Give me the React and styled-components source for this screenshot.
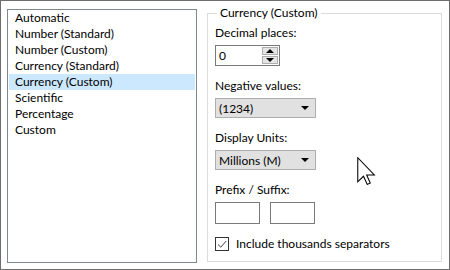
import React from "react";
import styled, { createGlobalStyle } from "styled-components";

const GlobalStyle = createGlobalStyle`
  html, body {
    margin: 0;
    padding: 0;
    background: #ffffff;
  }
  body {
    font-family: "Segoe UI", Lato, "Noto Sans", sans-serif;
    font-size: 12px;
    color: #000;
  }
`;

const formats = [
  "Automatic",
  "Number (Standard)",
  "Number (Custom)",
  "Currency (Standard)",
  "Currency (Custom)",
  "Scientific",
  "Percentage",
  "Custom",
];

function App() {
  return (
    <>
      <GlobalStyle />
      <Frame>
        <FormatList>
          {formats.map((f) => (
            <ListItem key={f} selected={f === "Currency (Custom)"}>
              {f}
            </ListItem>
          ))}
        </FormatList>
        <Group>
          <Legend>Currency (Custom)</Legend>
          <FieldLabel>Decimal places:</FieldLabel>
          <Spinner>
            <SpinValue>0</SpinValue>
            <SpinButtons>
              <SpinButton>
                <Arrow up />
              </SpinButton>
              <SpinButton>
                <Arrow />
              </SpinButton>
            </SpinButtons>
          </Spinner>

          <FieldLabel gap>Negative values:</FieldLabel>
          <Dropdown>
            <span>(1234)</span>
            <Arrow />
          </Dropdown>

          <FieldLabel gap>Display Units:</FieldLabel>
          <Dropdown>
            <span>Millions (M)</span>
            <Arrow />
          </Dropdown>

          <FieldLabel gap>Prefix / Suffix:</FieldLabel>
          <AffixRow>
            <TextBox />
            <TextBox />
          </AffixRow>

          <CheckRow>
            <CheckBox>
              <svg width="12" height="12" viewBox="0 0 12 12">
                <path d="M2 6.5 L4.8 9.2 L10.2 3" fill="none" stroke="#444" strokeWidth="1" />
              </svg>
            </CheckBox>
            <span>Include thousands separators</span>
          </CheckRow>
        </Group>
        <Cursor>
          <svg width="19" height="28" viewBox="0 0 12.6 18.6">
            <path
              d="M0.5 0.5 L0.5 16.5 L4.3 12.8 L6.8 18.2 L8.8 17.3 L6.4 11.9 L11.5 11.9 Z"
              fill="#fff"
              stroke="#000"
              strokeWidth="0.7"
              strokeLinejoin="miter"
            />
          </svg>
        </Cursor>
      </Frame>
    </>
  );
}

export default App;

const Frame = styled.div`
  position: relative;
  box-sizing: border-box;
  width: 450px;
  height: 270px;
  border: 1px solid #6d6d6d;
  padding: 4px 7px 0 6px;
  display: flex;
  align-items: flex-start;
  gap: 10px;
`;

const FormatList = styled.ul`
  box-sizing: border-box;
  list-style: none;
  margin: 4px 0 0 0;
  padding: 0 1px;
  width: 190px;
  height: 254px;
  border: 1px solid #828790;
`;

const ListItem = styled.li`
  height: 16px;
  line-height: 16px;
  padding-left: 6px;
  background: ${(p) => (p.selected ? "#cce8ff" : "transparent")};
`;

const Group = styled.fieldset`
  box-sizing: border-box;
  flex: 1;
  margin: 0;
  height: 257px;
  border: 1px solid #dcdcdc;
  padding: 4px 7px 0 7px;
  display: flex;
  flex-direction: column;
  align-items: flex-start;
`;

const Legend = styled.legend`
  padding: 0 3px;
  margin-left: 2px;
  line-height: 16px;
`;

const FieldLabel = styled.div`
  line-height: 16px;
  margin-top: ${(p) => (p.gap ? "12px" : "0")};
  margin-bottom: 4px;
`;

const Spinner = styled.div`
  box-sizing: border-box;
  width: 65px;
  height: 21px;
  border: 1px solid #7a7a7a;
  display: flex;
  align-items: center;
  padding: 1px;
`;

const SpinValue = styled.span`
  flex: 1;
  padding-left: 2px;
  line-height: 16px;
`;

const SpinButtons = styled.div`
  display: flex;
  flex-direction: column;
  gap: 1px;
`;

const SpinButton = styled.div`
  box-sizing: border-box;
  width: 16px;
  height: 8px;
  background: #e5e5e5;
  border: 1px solid #adadad;
  display: flex;
  align-items: center;
  justify-content: center;
`;

const Arrow = styled.span`
  width: 0;
  height: 0;
  border-left: 4px solid transparent;
  border-right: 4px solid transparent;
  ${(p) =>
    p.up ? "border-bottom: 4px solid #000;" : "border-top: 4px solid #000;"}
`;

const Dropdown = styled.div`
  box-sizing: border-box;
  width: 101px;
  height: 20px;
  border: 1px solid #adadad;
  background: #e1e1e1;
  display: flex;
  align-items: center;
  justify-content: space-between;
  padding: 0 6px 0 3px;
`;

const AffixRow = styled.div`
  display: flex;
  gap: 10px;
`;

const TextBox = styled.div`
  box-sizing: border-box;
  width: 45px;
  height: 22px;
  border: 1px solid #7a7a7a;
  background: #fff;
`;

const CheckRow = styled.label`
  display: flex;
  align-items: center;
  gap: 7px;
  margin-top: 12px;
  line-height: 16px;
`;

const CheckBox = styled.span`
  box-sizing: border-box;
  width: 14px;
  height: 14px;
  border: 1px solid #333;
  display: flex;
  align-items: center;
  justify-content: center;
`;

const Cursor = styled.div`
  position: absolute;
  left: 356px;
  top: 156px;
  line-height: 0;
  pointer-events: none;
`;
